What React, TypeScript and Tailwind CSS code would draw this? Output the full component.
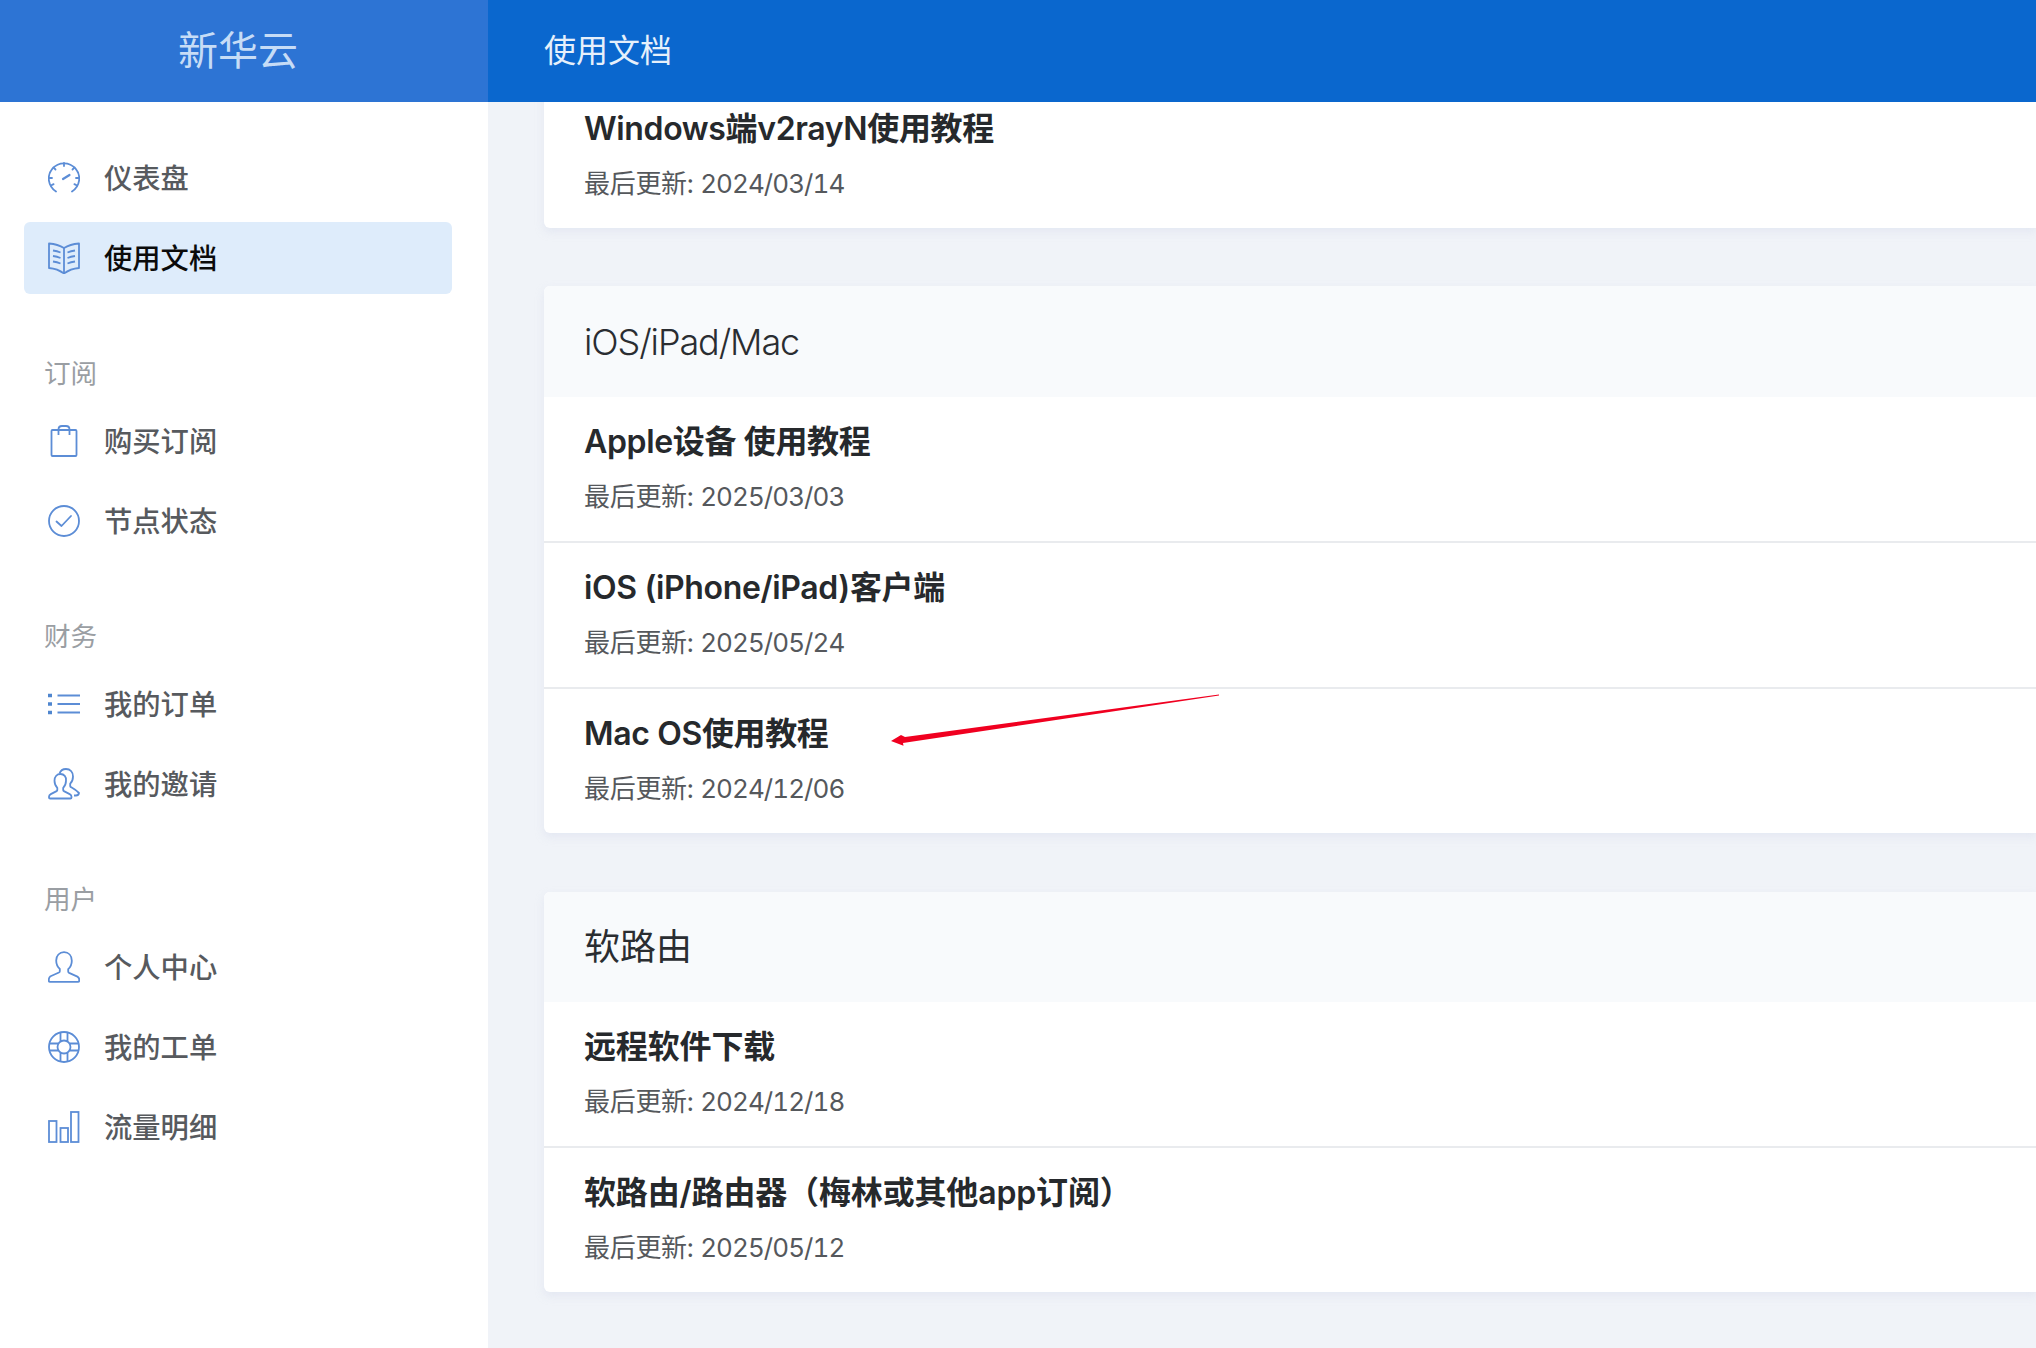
import React from "react";

const ic = "w-8 h-8 shrink-0 fill-none stroke-[#5c8dd6] stroke-[1.8]";

const Gauge = () => (
  <svg viewBox="0 0 32 32" className={ic} strokeLinecap="round">
    <path d="M8 29.5A15.2 15.2 0 1 1 24 29.5" />
    <path d="M16 1v3M5.4 5.4l2.1 2.1M26.6 5.4l-2.1 2.1M1 16h3M28 16h3M3 23.5l2.6-1.4M29 23.5l-2.6-1.4" />
    <path d="M15 17l6.5-4" strokeWidth={2.2} />
  </svg>
);
const Book = () => (
  <svg viewBox="0 0 32 32" className={ic} strokeLinejoin="round">
    <path d="M1 1.5C7 2 12 3.5 16 6c4-2.500 9-4 15-4.500V26c-6 .5-11 2.500-15 5.500C12 28.500 7 26.500 1 26z" />
    <path d="M16 6v25.500" />
    <path d="M5 8.500c2.500.4 5 1 7.500 2M5 14c2.500.4 5 1 7.500 2M5 19.500c2.500.4 5 1 7.500 2M27 8.500c-2.500.4-5 1-7.500 2M27 14c-2.500.4-5 1-7.500 2M27 19.500c-2.500.4-5 1-7.500 2" />
  </svg>
);
const Bag = () => (
  <svg viewBox="0 0 32 32" className={ic} strokeLinejoin="round">
    <rect x="3.500" y="5" width="25" height="26" rx="1" />
    <path d="M10.500 10V4.500C10.500 2.300 12 1 14 1h4c2 0 3.500 1.300 3.500 3.500V10" />
  </svg>
);
const CheckCircle = () => (
  <svg viewBox="0 0 32 32" className={ic} strokeLinecap="round" strokeLinejoin="round">
    <circle cx="16" cy="16" r="15" />
    <path d="M8.500 16.500l5 4.500 9.500-10" />
  </svg>
);
const ListIcon = () => (
  <svg viewBox="0 0 32 32" className={ic}>
    <path d="M0 7.500h4M0 16h4M0 24.500h4" strokeWidth={3.600} stroke="#4f86cf" />
    <path d="M9.500 7.500H32M9.500 16H32M9.500 24.500H32" />
  </svg>
);
const personPath =
  "M16 1.200c-4.600 0-7.800 3.400-7.800 8.200 0 3.500 1.600 6.600 3.600 8.400v2.400c0 .6-.3 1-.9 1.300l-8.300 3.700C1.500 26.200.800 27.300.800 28.600v1c0 .8.600 1.200 1.200 1.200h28c.7 0 1.200-.5 1.200-1.200v-1c0-1.300-.7-2.400-1.800-3l-8.300-3.700c-.6-.3-.9-.8-.9-1.300v-2.400c2-1.800 3.600-4.900 3.600-8.400C23.800 4.600 20.600 1.200 16 1.200z";
const Users = () => (
  <svg viewBox="0 0 32 32" className={ic} strokeLinejoin="round">
    <path d="M12.500 6c-3.500 0-6 2.700-6 6.800 0 3 1.200 5.400 2.800 7v2.200c0 .5-.2.9-.7 1.100l-5.800 3C1.600 26.700 1 27.700 1 28.800v.6c0 .7.500 1.100 1.100 1.100h20.300c.7 0 1.100-.4 1.100-1.100v-.6c0-1.100-.6-2.100-1.800-2.700l-5.800-3c-.5-.2-.7-.6-.7-1.100v-2.200c1.600-1.600 2.800-4 2.800-7C18.500 8.700 16 6 12.500 6z" />
    <path d="M11.500 5.500C12.500 2.500 15 1 18 1c4.200 0 7 3 7 7.500 0 3-1 5.500-2.800 7.200v2.300c0 .5.200.9.700 1.100l4.300 2.600c.8.500 2 1.600 3.800 3.300-.3 1.500-1.200 2.500-3 2.500H26" />
  </svg>
);
const UserIcon = () => (
  <svg viewBox="0 0 32 32" className={ic} strokeLinejoin="round">
    <path d={personPath} />
  </svg>
);
const Support = () => (
  <svg viewBox="0 0 32 32" className={ic}>
    <circle cx="16" cy="16" r="15" />
    <circle cx="16" cy="16" r="6.500" />
    <path d="M12.500 1.500v9M19.500 1.500v9M12.500 21.500v9M19.500 21.500v9M1.500 12.500h9M1.500 19.500h9M21.500 12.500h9M21.500 19.500h9" />
  </svg>
);
const Bars = () => (
  <svg viewBox="0 0 32 32" className={ic}>
    <rect x="1" y="10" width="7.500" height="21" />
    <rect x="12.500" y="17" width="7.500" height="14" />
    <rect x="23" y="1" width="7.500" height="30" />
  </svg>
);

function NavItem({ icon, label, active }: { icon: React.ReactNode; label: string; active?: boolean }) {
  return (
    <a
      className={
        active
          ? "flex items-center gap-6 h-[72px] pl-6 rounded-md bg-[#deecfb] text-[28.3px] text-[#0b0b0b] font-medium"
          : "flex items-center gap-6 h-[72px] pl-6 rounded-md text-[28.3px] text-[#575a5e] font-medium"
      }
    >
      {icon}
      <span className="pt-[2px]">{label}</span>
    </a>
  );
}

function NavGroup({ title, children }: { title: string; children: React.ReactNode }) {
  return (
    <div className="mt-[58px] flex flex-col gap-2">
      <div className="h-[44px] mb-px pl-5 text-[26.6px] leading-[42px] text-[#9a9ea3]">{title}</div>
      {children}
    </div>
  );
}

function Row({ title, date, last, tight }: { title: string; date: string; last?: boolean; tight?: boolean }) {
  return (
    <div className={last ? "h-[144px] pl-10 pt-[23px]" : "h-[146px] pl-10 pt-[23px] border-b-2 border-[#e9ebee]"}>
      <div
        className={
          tight
            ? "text-[32px] leading-[44px] font-semibold text-[#26292c] tracking-[-0.35px]"
            : "text-[32px] leading-[44px] font-semibold text-[#26292c] tracking-[-0.15px]"
        }
      >
        {title}
      </div>
      <div className="mt-[15px] text-[26px] leading-[36px] text-[#55585c] tabular-nums tracking-[-0.3px]">
        最后更新: <span className="tracking-[-0.95px]">{date}</span>
      </div>
    </div>
  );
}

function Card({ title, tight, className, children }: { title?: string; tight?: boolean; className?: string; children: React.ReactNode }) {
  return (
    <section className={"bg-white rounded-l-md shadow-[0_4px_8px_rgba(222,226,240,0.7)] " + (className ?? "")}>
      {title && (
        <div
          className={
            tight
              ? "h-[111px] pl-10 flex items-center bg-[#f8fafc] rounded-tl-md text-[36px] text-[#2a2d31] font-light tracking-[-1.1px]"
              : "h-[110px] pl-10 flex items-center bg-[#f8fafc] rounded-tl-md text-[36px] text-[#2a2d31]"
          }
        >
          {title}
        </div>
      )}
      {children}
    </section>
  );
}

export default function App() {
  return (
    <div className="relative flex h-[1348px] w-full overflow-hidden bg-[#f0f3f8] font-['Inter','Noto_Sans_CJK_SC',sans-serif]">
      <aside className="w-[488px] shrink-0 bg-white">
        <div className="h-[102px] pr-3 flex items-center justify-center bg-[#2d74d4] text-[40px] text-[#c6dcf6]">新华云</div>
        <nav className="pt-10 pl-6 pr-9 flex flex-col">
          <div className="flex flex-col gap-2">
            <NavItem icon={<Gauge />} label="仪表盘" />
            <NavItem icon={<Book />} label="使用文档" active />
          </div>
          <NavGroup title="订阅">
            <NavItem icon={<Bag />} label="购买订阅" />
            <NavItem icon={<CheckCircle />} label="节点状态" />
          </NavGroup>
          <NavGroup title="财务">
            <NavItem icon={<ListIcon />} label="我的订单" />
            <NavItem icon={<Users />} label="我的邀请" />
          </NavGroup>
          <NavGroup title="用户">
            <NavItem icon={<UserIcon />} label="个人中心" />
            <NavItem icon={<Support />} label="我的工单" />
            <NavItem icon={<Bars />} label="流量明细" />
          </NavGroup>
        </nav>
      </aside>
      <div className="flex-1 min-w-0 flex flex-col">
        <header className="relative z-10 h-[102px] shrink-0 flex items-center pl-14 bg-[#0a67ce] text-[32px] text-[#e6f0fb]">
          使用文档
        </header>
        <main className="flex-1 overflow-hidden pl-14">
          <div className="-mt-[18px] flex flex-col gap-[58px]">
            <Card>
              <Row title="Windows端v2rayN使用教程" date="2024/03/14" last tight />
            </Card>
            <Card title="iOS/iPad/Mac" tight>
              <Row title="Apple设备 使用教程" date="2025/03/03" tight />
              <Row title="iOS (iPhone/iPad)客户端" date="2025/05/24" tight />
              <Row title="Mac OS使用教程" date="2024/12/06" last tight />
            </Card>
            <Card title="软路由" className="mt-px">
              <Row title="远程软件下载" date="2024/12/18" />
              <Row title="软路由/路由器（梅林或其他app订阅）" date="2025/05/12" last />
            </Card>
          </div>
        </main>
      </div>
      <svg className="absolute left-[885px] top-[690px] w-[340px] h-[60px]" viewBox="885 690 340 60">
        <path d="M1219 694.600L1219 695.400 903 743 903.500 745.700 891 741 901 735 905 737z" fill="#f00020" />
      </svg>
    </div>
  );
}
